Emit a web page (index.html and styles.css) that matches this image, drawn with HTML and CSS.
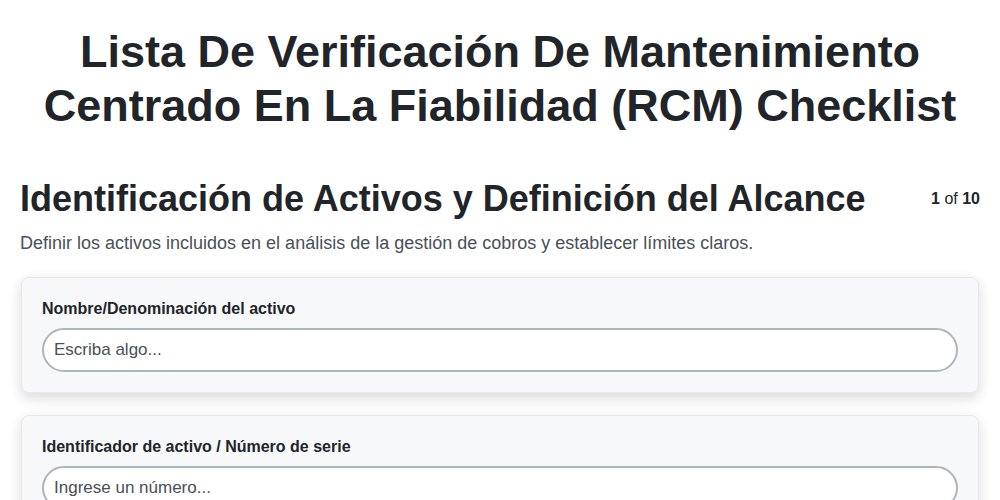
FILE: index.html
```html
<!DOCTYPE html>
<html lang="es">
<head>
    <meta charset="UTF-8">
    <meta name="viewport" content="width=device-width, initial-scale=1.0">
    <title>RCM Checklist</title>
    <link rel="stylesheet" href="styles.css">
</head>
<body>
    <h1 class="page-title">Lista De Verificación De Mantenimiento Centrado En La Fiabilidad (RCM) Checklist</h1>
    <div class="section">
        <div class="section-head">
            <h2>Identificación de Activos y Definición del Alcance</h2>
            <div class="step"><b>1</b> of <b>10</b></div>
        </div>
        <p class="section-desc">Definir los activos incluidos en el análisis de la gestión de cobros y establecer límites claros.</p>

        <div class="card">
            <label for="asset-name">Nombre/Denominación del activo</label>
            <input type="text" id="asset-name" placeholder="Escriba algo...">
        </div>

        <div class="card">
            <label for="asset-id">Identificador de activo / Número de serie</label>
            <input type="text" id="asset-id" placeholder="Ingrese un número...">
        </div>
    </div>
</body>
</html>
```

FILE: styles.css
```css
body {
    margin: 0;
    padding: 0 20px;
    background: #fff;
    color: #212529;
    font-family: "Liberation Sans", Arial, sans-serif;
}

.page-title {
    margin: 25px 0 0;
    font-size: 45px;
    line-height: 54px;
    text-align: center;
}

.section {
    margin-top: 44px;
}

.section-head {
    display: flex;
    justify-content: space-between;
    align-items: center;
}

.section-head h2 {
    margin: 0;
    font-size: 36px;
    line-height: 43px;
}

.step {
    font-size: 16px;
    color: #212529;
}

.section-desc {
    margin: 13px 0 23px;
    font-size: 18px;
    color: #495057;
}

.card {
    display: flex;
    flex-direction: column;
    margin: 0 1px 22px;
    padding: 20px;
    background: #f7f8fa;
    border: 1px solid #e6e8eb;
    border-radius: 8px;
    box-shadow: 0 5px 14px rgba(0, 0, 0, 0.15);
}

.card label {
    font-size: 16px;
    font-weight: bold;
    line-height: 22px;
    margin-bottom: 8px;
}

.card input {
    height: 44px;
    box-sizing: border-box;
    padding: 0 10px;
    border: 2px solid #adb5bd;
    border-radius: 22px;
    background: #fff;
    font-family: inherit;
    font-size: 17px;
    color: #212529;
}

.card input::placeholder {
    color: #495057;
}
```
